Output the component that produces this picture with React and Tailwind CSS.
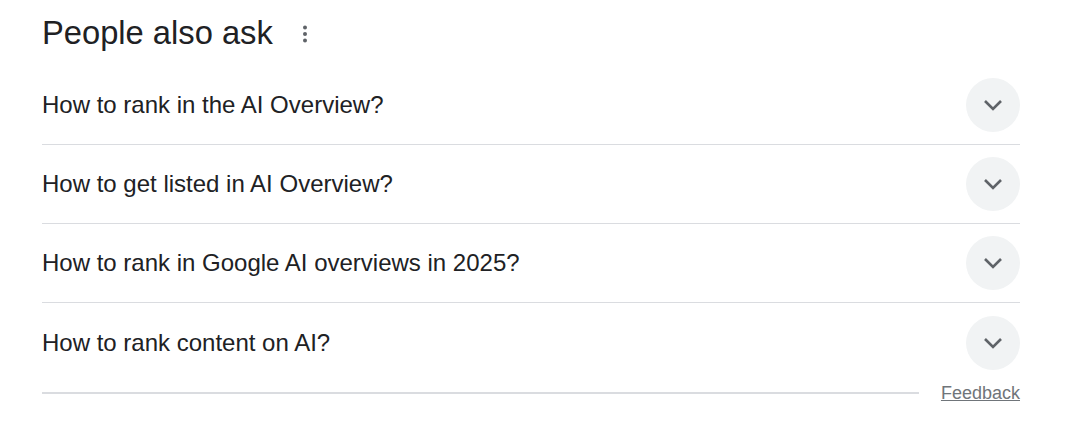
import React from 'react';

const questions = [
  'How to rank in the AI Overview?',
  'How to get listed in AI Overview?',
  'How to rank in Google AI overviews in 2025?',
  'How to rank content on AI?',
];

const Chevron = () => (
  <svg width="20" height="12" viewBox="0 0 20 12" fill="none">
    <path d="M2 2l8 8 8-8" stroke="#5f6368" strokeWidth="2.6" />
  </svg>
);

const Kebab = () => (
  <svg width="24" height="24" viewBox="0 0 24 24" fill="#5f6368">
    <circle cx="12" cy="5.5" r="2" />
    <circle cx="12" cy="12" r="2" />
    <circle cx="12" cy="18.5" r="2" />
  </svg>
);

export default function App() {
  return (
    <div
      className="w-[1065px] h-[436px] bg-white text-[#202124]"
      style={{ fontFamily: '"Liberation Sans", Arial, sans-serif' }}
    >
      <div className="ml-[42px] w-[978px] pt-[13px]">
        <div className="flex items-center h-[40px] mb-[13px]">
          <h2 className="text-[32.7px] leading-[40px] font-normal">People also ask</h2>
          <div className="ml-[20px] mt-[1px]">
            <Kebab />
          </div>
        </div>

        {questions.map((q, i) => (
          <div
            key={q}
            className={`flex items-center justify-between h-[79px] ${
              i < questions.length - 1 ? 'border-b border-[#dadce0]' : ''
            }`}
          >
            <span className="text-[24px] leading-[30px]">{q}</span>
            <div className="w-[54px] h-[54px] rounded-full bg-[#f1f3f4] flex items-center justify-center">
              <Chevron />
            </div>
          </div>
        ))}

        <div className="flex items-center h-[22px]">
          <div className="flex-1 h-[2px] bg-[#dadce0]" />
          <a className="ml-[22px] text-[18px] leading-[22px] text-[#70757a] underline">Feedback</a>
        </div>
      </div>
    </div>
  );
}
